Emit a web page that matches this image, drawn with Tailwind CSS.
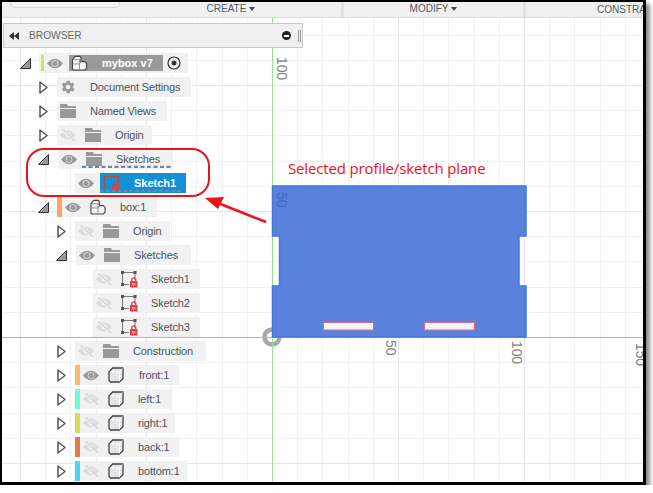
<!DOCTYPE html>
<html lang="en">
<head>
    <meta charset="UTF-8">
    <title>Browser tree with selected sketch</title>
    <script src="https://cdn.jsdelivr.net/npm/@tailwindcss/browser@4"></script>
</head>
<body class="bg-white overflow-hidden font-['Liberation_Sans',Arial,sans-serif] text-[11px] tracking-[-0.15px] text-[#4a5360]">
    <!-- shared icons -->
    <svg class="hidden" width="0" height="0">
        <symbol id="eye" viewBox="0 0 16 11"><path d="M0 5.500Q8-4 16 5.500 8 15 0 5.500Z" fill="#999"/><circle cx="8" cy="5.500" r="3.300" fill="#e6e6e6"/><circle cx="8" cy="5.500" r="2.500" fill="#999"/></symbol>
        <symbol id="eye-off" viewBox="0 0 16 12"><path d="M0 6Q8-3 16 6 8 15 0 6Z" fill="#dcdcdc"/><circle cx="8" cy="6" r="2.500" fill="#f1f1f1"/><path d="M2 0 14.500 12" stroke="#f1f1f1" stroke-width="3"/><path d="M2.500 0 15 12" stroke="#d6d6d6" stroke-width="1.500"/></symbol>
        <symbol id="folder" viewBox="0 0 16 14"><path d="M0 0H7L8 2H16V4H0Z" fill="#999"/><path d="M0 5H16V14H0Z" fill="#999"/></symbol>
        <symbol id="closed" viewBox="0 0 9 13"><path d="M1 1 8 6.500 1 12Z" fill="#fff" stroke="#555" stroke-width="1.500" stroke-linejoin="round"/></symbol>
        <symbol id="open" viewBox="0 0 11 11"><path d="M10.500.5V10.500H.5Z" fill="#999" stroke="#333"/></symbol>
        <symbol id="cube" viewBox="0 0 16 16"><path d="M1 5 4.500 1H15V11.500L11.500 15H2.500L1 13.500Z" fill="#e2e4e7" stroke="#444" stroke-width="1.300" stroke-linejoin="round"/><path d="M2 5H11.500V14.500M11.500 5 14.500 1.500" fill="none" stroke="#fff"/></symbol>
        <symbol id="comp" viewBox="0 0 17 17"><path d="M1 15V5L4 1.500H9L10 3V7H14L16 9V14L14 16H2Z" fill="#f6f6f6" stroke="#444" stroke-width="1.200" stroke-linejoin="round"/><path d="M1.500 9.500H8.500V16M8.500 9.500 10.500 7M2 5H8.500L10 3M8.500 5V9.500" fill="none" stroke="#8a8a8a"/></symbol>
        <symbol id="sketch" viewBox="0 0 17 17"><path d="M1.500 1.500H14M1.500 1.500V13.500M14 1.500V9M1.500 13.500H8" fill="none" stroke="#777"/><path d="M0 0H3V3H0ZM12.500 0H15.500V3H12.500ZM0 12H3V15H0Z" fill="#555"/><rect x="9" y="10" width="7.500" height="6.500" fill="#d9414f"/><rect x="11" y="12" width="3.500" height="2.500" fill="#ee8d96"/><path d="M10.800 10V8.800A2 2 0 0 1 14.800 8.800V10" fill="none" stroke="#d9414f" stroke-width="1.300"/></symbol>
        <symbol id="sketch-sel" viewBox="0 0 19 17"><path d="M1.500 1.500H15.500M1.500 1.500V14.500M15.500 1.500V8" fill="none" stroke="#b3493f"/><rect x="9" y="10.500" width="7.500" height="6" fill="#d8434f"/><path d="M10.800 10.500V9A2 2 0 0 1 14.800 9V10.500" fill="none" stroke="#d8434f" stroke-width="1.300"/></symbol>
        <symbol id="hatch" viewBox="0 0 90 4" preserveAspectRatio="none"><path d="M0 3 90 3" stroke="#6f86a8" stroke-width="2.500" stroke-dasharray="4 2.500"/></symbol>
    </svg>

    <!-- window frame with its drop shadow -->
    <div class="relative w-[646px] h-[485px] overflow-hidden bg-white border-solid border-black border-l-2 border-t-2 border-r-[3px] border-b-[3px] shadow-[4px_4px_4px_rgba(0,0,0,0.45)]">

        <!-- canvas: grid, axes, profile -->
        <svg class="absolute left-0 top-0" width="641" height="480" viewBox="2 2 641 480">
            <g id="grid"></g>
            <circle cx="272" cy="337" r="7.500" fill="#fff" stroke="#a8a8a8" stroke-width="4.500"/>
            <path d="M272.500 18V482" stroke="#93e58f"/>
            <path d="M2 337.500H643" stroke="#f09a9a"/>
            <path d="M272.500 186H526V236H519V286H526V337H272.500V286H279.500V236H272.500Z" fill="#5a82dd" stroke="#3f78de" stroke-width="1.500"/>
            <rect x="323.500" y="322.500" width="50" height="7.500" fill="#f3f8fb" stroke="#e06a86"/>
            <rect x="424.500" y="322.500" width="50" height="7.500" fill="#f3f8fb" stroke="#e06a86"/>
            <g font-family="Liberation Sans, Arial, sans-serif" font-size="14" fill="#808080">
                <text transform="translate(277 57) rotate(90)">100</text>
                <text transform="translate(277 192) rotate(90)" fill="#456ab5">50</text>
                <text transform="translate(386 340) rotate(90)">50</text>
                <text transform="translate(512 341) rotate(90)">100</text>
                <text transform="translate(636 343) rotate(90)">150</text>
            </g>
        </svg>

        <!-- toolbar -->
        <div class="relative flex h-[16px] bg-[#f0f0f0] border-b border-[#dcdcdc] text-[#4f5866] text-[10px] tracking-normal leading-[13px] overflow-hidden">
            <div class="relative shrink-0 w-[116px]">
                <div class="absolute left-[8px] top-[-6px] w-[110px] h-[12px] bg-[#f4f4f4] border border-[#d8d8d8] rounded-b-[5px]"></div>
            </div>
            <div class="shrink-0 w-[226px] flex items-center justify-center gap-[3px] pl-[3px] pb-[2px] border-r-[3px] border-[#e2e2e2]">CREATE <span class="w-0 h-0 border-x-[3px] border-x-transparent border-t-[4px] border-t-[#444]"></span></div>
            <div class="shrink-0 w-[182px] flex items-center justify-center gap-[3px] pb-[2px] border-r-[3px] border-[#e2e2e2]">MODIFY <span class="w-0 h-0 border-x-[3px] border-x-transparent border-t-[4px] border-t-[#444]"></span></div>
            <div class="shrink-0 pl-[71px] pt-px whitespace-nowrap">CONSTRAINTS</div>
        </div>

        <!-- browser header -->
        <div class="absolute left-[1px] top-[21px] w-[300px] h-[25px] flex items-center bg-[#f0f0f0] border border-[#c8c8c8]">
            <svg class="ml-[5px]" width="10" height="8" viewBox="0 0 10 8"><path d="M5 0V8L0 4ZM10 0V8L5 4Z" fill="#333"/></svg>
            <span class="ml-[10px] text-[#666] text-[10.200px] tracking-normal">BROWSER</span>
            <span class="ml-auto w-[9px] h-[9px] rounded-full bg-[#222] flex items-center justify-center"><span class="w-[5px] h-[2px] bg-white"></span></span>
            <span class="ml-[7px] mr-[1px] w-[3px] h-[12px] border-x border-[#999]"></span>
        </div>

        <!-- browser tree -->
        <div class="absolute left-0 top-[51px] flex flex-col gap-1 w-[300px]">
            <div class="flex items-center h-5 ml-[18px]">
                <svg class="w-[11px] h-[11px] mr-[8px]"><use href="#open"/></svg>
                <div class="flex items-center h-5 w-[149px] bg-[#f1f1f1]">
                    <span class="ml-[2px] w-[3px] h-[16px] bg-[#b9ec6e]"></span>
                    <svg class="ml-[3px] w-4 h-[11px]"><use href="#eye"/></svg>
                    <div class="ml-[6px] flex items-center h-[16px] w-[94px] bg-[#999]">
                        <svg class="ml-[2px] w-[17px] h-[16px]"><use href="#comp"/></svg>
                        <span class="ml-[14px] font-bold text-white tracking-normal">mybox v7</span>
                    </div>
                    <svg class="ml-[4px]" width="14" height="14" viewBox="0 0 14 14"><circle cx="7" cy="7" r="6" fill="none" stroke="#333" stroke-width="1.200"/><circle cx="7" cy="7" r="2.500" fill="#333"/></svg>
                </div>
            </div>
            <div class="flex items-center h-5 ml-[37px]">
                <svg class="w-[9px] h-[13px] mr-[9px]"><use href="#closed"/></svg>
                <div class="flex items-center h-5 w-[134px] bg-[#f1f1f1]">
                    <svg class="ml-[3px]" width="16" height="16" viewBox="0 0 24 24"><path fill="#999" d="M19.4 13a7.500 7.500 0 0 0 0-2l2.300-1.800-2.300-3.900-2.700 1.100a7.500 7.500 0 0 0-1.700-1L14.600 2.500H10L9.500 5.400a7.500 7.500 0 0 0-1.700 1L5.100 5.300 2.800 9.200 5 11a7.500 7.500 0 0 0 0 2l-2.200 1.800 2.300 3.900 2.700-1.100a7.500 7.500 0 0 0 1.700 1l.500 2.900h4.600l.400-2.900a7.500 7.500 0 0 0 1.700-1l2.700 1.100 2.300-3.900ZM12.200 15.500a3.500 3.500 0 1 1 0-7 3.500 3.500 0 0 1 0 7Z"/></svg>
                    <span class="ml-[14px]">Document Settings</span>
                </div>
            </div>
            <div class="flex items-center h-5 ml-[37px]">
                <svg class="w-[9px] h-[13px] mr-[9px]"><use href="#closed"/></svg>
                <div class="flex items-center h-5 w-[110px] bg-[#f1f1f1]">
                    <svg class="ml-[3px] w-4 h-[14px]"><use href="#folder"/></svg>
                    <span class="ml-[14px]">Named Views</span>
                </div>
            </div>
            <div class="flex items-center h-5 ml-[37px]">
                <svg class="w-[9px] h-[13px] mr-[9px]"><use href="#closed"/></svg>
                <div class="flex items-center h-5 w-[95px] bg-[#f1f1f1]">
                    <svg class="ml-[3px] w-4 h-[12px]"><use href="#eye-off"/></svg>
                    <svg class="ml-[9px] w-4 h-[14px]"><use href="#folder"/></svg>
                    <span class="ml-[14px]">Origin</span>
                </div>
            </div>
            <div class="flex items-center h-5 ml-[36px]">
                <svg class="w-[11px] h-[11px] mr-[9px]"><use href="#open"/></svg>
                <div class="relative flex items-center h-5 w-[115px] bg-[#f1f1f1]">
                    <svg class="ml-[3px] w-4 h-[11px]"><use href="#eye"/></svg>
                    <svg class="ml-[9px] w-4 h-[14px]"><use href="#folder"/></svg>
                    <span class="ml-[14px]">Sketches</span>
                    <svg class="absolute left-[24px] top-[15px] w-[90px] h-[4px]"><use href="#hatch"/></svg>
                </div>
            </div>
            <div class="flex items-center h-5 ml-[73px]">
                <div class="flex items-center h-5 w-[111px] bg-[#f1f1f1]">
                    <svg class="ml-[3px] w-4 h-[11px]"><use href="#eye"/></svg>
                    <div class="relative ml-[6px] flex items-center h-5 w-[86px] bg-[#0f93d6]">
                        <svg class="ml-[3px] w-[19px] h-[17px]"><use href="#sketch-sel"/></svg>
                        <span class="ml-[12px] font-bold text-white tracking-normal">Sketch1</span>
                        <svg class="absolute left-0 top-[15px] w-[82px] h-[4px]"><use href="#hatch"/></svg>
                    </div>
                </div>
            </div>
            <div class="flex items-center h-5 ml-[36px]">
                <svg class="w-[11px] h-[11px] mr-[8px]"><use href="#open"/></svg>
                <span class="w-[5px] h-5 bg-[#ffa366]"></span>
                <div class="flex items-center h-5 w-[95px] bg-[#f1f1f1]">
                    <svg class="ml-[3px] w-4 h-[11px]"><use href="#eye"/></svg>
                    <svg class="ml-[9px] w-4 h-4"><use href="#comp"/></svg>
                    <span class="ml-[14px]">box:1</span>
                </div>
            </div>
            <div class="flex items-center h-5 ml-[55px]">
                <svg class="w-[9px] h-[13px] mr-[9px]"><use href="#closed"/></svg>
                <div class="flex items-center h-5 w-[95px] bg-[#f1f1f1]">
                    <svg class="ml-[3px] w-4 h-[12px]"><use href="#eye-off"/></svg>
                    <svg class="ml-[9px] w-4 h-[14px]"><use href="#folder"/></svg>
                    <span class="ml-[14px]">Origin</span>
                </div>
            </div>
            <div class="flex items-center h-5 ml-[54px]">
                <svg class="w-[11px] h-[11px] mr-[9px]"><use href="#open"/></svg>
                <div class="flex items-center h-5 w-[115px] bg-[#f1f1f1]">
                    <svg class="ml-[3px] w-4 h-[11px]"><use href="#eye"/></svg>
                    <svg class="ml-[9px] w-4 h-[14px]"><use href="#folder"/></svg>
                    <span class="ml-[14px]">Sketches</span>
                </div>
            </div>
            <div class="flex items-center h-5 ml-[91px] w-[107px] bg-[#f1f1f1]">
                <svg class="ml-[3px] w-4 h-[12px]"><use href="#eye-off"/></svg>
                <svg class="ml-[9px] w-[17px] h-[17px]"><use href="#sketch"/></svg>
                <span class="ml-[13px]">Sketch1</span>
            </div>
            <div class="flex items-center h-5 ml-[91px] w-[107px] bg-[#f1f1f1]">
                <svg class="ml-[3px] w-4 h-[12px]"><use href="#eye-off"/></svg>
                <svg class="ml-[9px] w-[17px] h-[17px]"><use href="#sketch"/></svg>
                <span class="ml-[13px]">Sketch2</span>
            </div>
            <div class="flex items-center h-5 ml-[91px] w-[107px] bg-[#f1f1f1]">
                <svg class="ml-[3px] w-4 h-[12px]"><use href="#eye-off"/></svg>
                <svg class="ml-[9px] w-[17px] h-[17px]"><use href="#sketch"/></svg>
                <span class="ml-[13px]">Sketch3</span>
            </div>
            <div class="flex items-center h-5 ml-[55px]">
                <svg class="w-[9px] h-[13px] mr-[9px]"><use href="#closed"/></svg>
                <div class="flex items-center h-5 w-[131px] bg-[#f1f1f1]">
                    <svg class="ml-[3px] w-4 h-[12px]"><use href="#eye-off"/></svg>
                    <svg class="ml-[9px] w-4 h-[14px]"><use href="#folder"/></svg>
                    <span class="ml-[14px]">Construction</span>
                </div>
            </div>
            <div class="flex items-center h-5 ml-[55px]">
                <svg class="w-[9px] h-[13px] mr-[9px]"><use href="#closed"/></svg>
                <span class="w-[5px] h-5 bg-[#ffb56e]"></span>
                <div class="flex items-center h-5 w-[99px] bg-[#f1f1f1]">
                    <svg class="ml-[3px] w-4 h-[11px]"><use href="#eye"/></svg>
                    <svg class="ml-[9px] w-4 h-4"><use href="#cube"/></svg>
                    <span class="ml-[15px]">front:1</span>
                </div>
            </div>
            <div class="flex items-center h-5 ml-[55px]">
                <svg class="w-[9px] h-[13px] mr-[9px]"><use href="#closed"/></svg>
                <span class="w-[5px] h-5 bg-[#66ffd9]"></span>
                <div class="flex items-center h-5 w-[92px] bg-[#f1f1f1]">
                    <svg class="ml-[3px] w-4 h-[12px]"><use href="#eye-off"/></svg>
                    <svg class="ml-[9px] w-4 h-4"><use href="#cube"/></svg>
                    <span class="ml-[14px]">left:1</span>
                </div>
            </div>
            <div class="flex items-center h-5 ml-[55px]">
                <svg class="w-[9px] h-[13px] mr-[9px]"><use href="#closed"/></svg>
                <span class="w-[5px] h-5 bg-[#d6dc55]"></span>
                <div class="flex items-center h-5 w-[95px] bg-[#f1f1f1]">
                    <svg class="ml-[3px] w-4 h-[12px]"><use href="#eye-off"/></svg>
                    <svg class="ml-[9px] w-4 h-4"><use href="#cube"/></svg>
                    <span class="ml-[14px]">right:1</span>
                </div>
            </div>
            <div class="flex items-center h-5 ml-[55px]">
                <svg class="w-[9px] h-[13px] mr-[9px]"><use href="#closed"/></svg>
                <span class="w-[5px] h-5 bg-[#e8764f]"></span>
                <div class="flex items-center h-5 w-[99px] bg-[#f1f1f1]">
                    <svg class="ml-[3px] w-4 h-[12px]"><use href="#eye-off"/></svg>
                    <svg class="ml-[9px] w-4 h-4"><use href="#cube"/></svg>
                    <span class="ml-[14px]">back:1</span>
                </div>
            </div>
            <div class="flex items-center h-5 ml-[55px]">
                <svg class="w-[9px] h-[13px] mr-[9px]"><use href="#closed"/></svg>
                <span class="w-[5px] h-5 bg-[#4dd2f5]"></span>
                <div class="flex items-center h-5 w-[107px] bg-[#f1f1f1]">
                    <svg class="ml-[3px] w-4 h-[12px]"><use href="#eye-off"/></svg>
                    <svg class="ml-[9px] w-4 h-4"><use href="#cube"/></svg>
                    <span class="ml-[14px]">bottom:1</span>
                </div>
            </div>
        </div>

        <!-- red callout drawn on top of the screenshot -->
        <svg class="absolute left-0 top-0 pointer-events-none" width="641" height="480" viewBox="2 2 641 480">
            <rect x="27" y="149" width="182" height="47" rx="17" fill="none" stroke="#e8141c" stroke-width="2"/>
            <path d="M266 222 218 203" stroke="#f01018" stroke-width="2.500"/>
            <path d="M205 198 224 197 218 209Z" fill="#f01018"/>
            <text x="288" y="174" font-family="Open Sans, sans-serif" font-size="15" fill="#f01018">Selected profile/sketch plane</text>
        </svg>
    </div>

    <script>
        // grid lines are 25.2px apart, every fifth one is darker
        const grid = document.getElementById('grid');
        let lines = '';
        for (let i = -11; i <= 15; i++) {
            const x = Math.round(272 + i * 25.2) + 0.5;
            const color = i % 5 === 0 ? '#e6e6e6' : '#f1f1f1';
            lines += `<path d="M${x} 18V482" stroke="${color}"/>`;
        }
        for (let i = -6; i <= 13; i++) {
            const y = Math.round(337 - i * 25.2) + 0.5;
            const color = i % 5 === 0 ? '#e6e6e6' : '#f1f1f1';
            lines += `<path d="M2 ${y}H643" stroke="${color}"/>`;
        }
        grid.innerHTML = lines;
    </script>
</body>
</html>
